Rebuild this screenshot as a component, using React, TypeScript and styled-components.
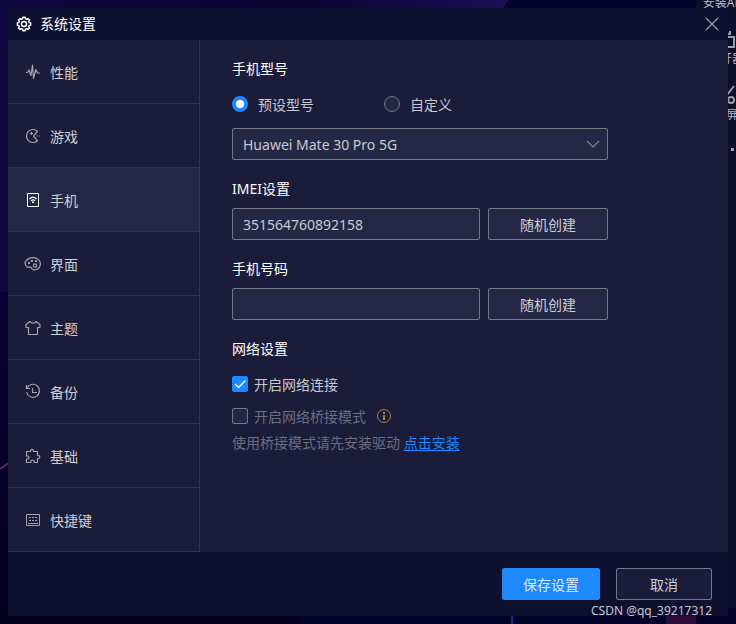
import React, { useState } from "react";
import styled, { createGlobalStyle, css } from "styled-components";

const font = '"Noto Sans", "Noto Sans CJK SC", sans-serif';

const GlobalStyle = createGlobalStyle`
  * { box-sizing: border-box; }
  body { margin: 0; background: #04001f; font-family: ${font}; font-size: 14px; }
  button, input, select { font: inherit; margin: 0; }
`;

const Desktop = styled.div`
  position: relative;
  overflow: hidden;
  min-height: 100vh;
  padding: 8px;
`;

const Wallpaper = styled.svg`
  position: absolute;
  inset: 0;
  width: 100%;
  height: 100%;
`;

const ToolStrip = styled.div`
  position: absolute;
  top: -45px;
  right: -20px;
  bottom: 0;
  width: 60px;
  color: #9c9dab;
  background: linear-gradient(#0c0d28 0 653px, transparent 653px);
`;

const Tool = styled.div`
  display: flex;
  flex-direction: column;
  align-items: center;
  height: 56px;
  padding-top: 16px;
  font-size: 12px;
  line-height: 16px;
  white-space: nowrap;
  color: #b9bac4;

  svg { width: 24px; height: 24px; flex: none; color: #9c9dab; }
`;

const Dialog = styled.section`
  position: relative;
  display: flex;
  flex-direction: column;
  background: #0d102e;
`;

const TitleBar = styled.header`
  display: flex;
  align-items: center;
  gap: 8px;
  height: 32px;
  padding: 0 8px;
  color: #fff;

  svg { width: 16px; height: 16px; }
`;

const Title = styled.h1`
  flex: 1;
  margin: 0;
  font-size: 14px;
  font-weight: 400;
  line-height: 24px;
`;

const CloseButton = styled.button`
  display: flex;
  padding: 0;
  border: 0;
  background: none;
  color: #9b9dab;
  cursor: pointer;
`;

const Body = styled.div`
  display: flex;
  background: #1a1c39;
`;

const Sidebar = styled.nav`
  flex: none;
  width: 192px;
  border-right: 1px solid #35344f;
`;

const NavItem = styled.button<{ $active: boolean }>`
  display: flex;
  align-items: center;
  gap: 8px;
  width: 100%;
  height: 64px;
  padding: 0 16px;
  border: 0;
  border-bottom: 1px solid #35344f;
  background: ${(p) => (p.$active ? "#252844" : "transparent")};
  color: #cfcfd4;
  text-align: left;
  cursor: pointer;

  svg { width: 18px; height: 18px; color: ${(p) => (p.$active ? "#fff" : "#a3a4b0")}; }
`;

const Panel = styled.main`
  flex: 1;
  min-width: 0;
  padding: 16px 32px;
`;

const Form = styled.form`
  display: flex;
  flex-direction: column;
  gap: 16px;
  max-width: 376px;
`;

const Section = styled.div`
  display: flex;
  flex-direction: column;
  gap: 6px;
`;

const headingStyle = css`
  margin: 0;
  font-size: 14px;
  font-weight: 400;
  line-height: 26px;
  color: #fff;
`;

const Heading = styled.h2`
  ${headingStyle}
`;

const FieldLabel = styled.label`
  ${headingStyle}
`;

const RadioRow = styled.div`
  display: grid;
  grid-template-columns: 152px 1fr;
  height: 34px;
`;

const Choice = styled.label<{ $gap: number; $dim?: boolean }>`
  display: flex;
  align-items: center;
  gap: ${(p) => p.$gap}px;
  height: 32px;
  color: ${(p) => (p.$dim ? "#6c6d80" : "#c8c8cf")};
`;

const Radio = styled.input`
  appearance: none;
  width: 16px;
  height: 16px;
  border: 1px solid #777886;
  border-radius: 50%;
  background: #252844;

  &:checked { border: 4px solid #1e88ff; background: #fff; }
`;

const Checkbox = styled.input`
  appearance: none;
  width: 16px;
  height: 16px;
  border: 1px solid #777886;
  border-radius: 2px;
  background: #252844;

  &:checked { border-color: #1e88ff; background: #1e88ff; }
`;

const CheckBoxWrap = styled.span`
  display: grid;
  width: 16px;
  height: 16px;

  > * { grid-area: 1 / 1; }
  svg { width: 16px; height: 16px; z-index: 1; color: #fff; pointer-events: none; }
`;

const SelectWrap = styled.div`
  display: grid;
  align-items: center;

  > * { grid-area: 1 / 1; }
  svg { width: 16px; height: 16px; justify-self: end; margin-right: 7px; color: #83848f; pointer-events: none; }
`;

const Select = styled.select`
  appearance: none;
  width: 100%;
  height: 32px;
  padding: 0 32px 0 10px;
  border: 1px solid #777886;
  border-radius: 2px;
  background: #252844;
  color: #c8c8cf;
`;

const FieldRow = styled.div`
  display: flex;
  gap: 8px;
`;

const TextInput = styled.input`
  flex: 1;
  min-width: 0;
  height: 32px;
  padding: 0 10px;
  border: 1px solid #777886;
  border-radius: 2px;
  background: #252844;
  color: #c8c8cf;
`;

const Button = styled.button<{ $width: number; $primary?: boolean; $fill?: string }>`
  width: ${(p) => p.$width}px;
  height: 32px;
  padding: 0;
  border: 1px solid ${(p) => (p.$primary ? "#1e88ff" : "#777886")};
  border-radius: 2px;
  background: ${(p) => (p.$primary ? "#1e88ff" : p.$fill ?? "#252844")};
  color: ${(p) => (p.$primary ? "#dcecff" : "#cfcfd4")};
  cursor: pointer;
`;

const OptionRow = styled.div`
  display: flex;
  align-items: center;
  gap: 10px;

  > svg { width: 16px; height: 16px; color: #b0803a; }
`;

const Hint = styled.p`
  margin: 0;
  line-height: 22px;
  color: #6c6d80;
`;

const Link = styled.a`
  color: #1e88ff;
  text-underline-offset: 2px;
`;

const Footer = styled.footer`
  display: flex;
  justify-content: flex-end;
  gap: 16px;
  padding: 16px;
`;

const Watermark = styled.span`
  position: absolute;
  right: 24px;
  bottom: 5px;
  font-size: 12px;
  line-height: 16px;
  color: #c4c4cc;
`;

const gearPath = Array.from({ length: 8 }, (_, i) => {
  const at = (r: number, turn: number) => {
    const a = ((i + turn) / 8) * Math.PI * 2 - Math.PI / 2;
    return `${(8 + r * Math.cos(a)).toFixed(2)} ${(8 + r * Math.sin(a)).toFixed(2)}`;
  };
  return `${i ? "L" : "M"}${at(6.8, -0.22)}L${at(6.8, 0.22)}L${at(5.4, 0.32)}L${at(5.4, 0.68)}`;
}).join("") + "Z";

const Icon = ({ size = 18, width = 1, children }: { size?: number; width?: number; children: React.ReactNode }) => (
  <svg viewBox={`0 0 ${size} ${size}`} fill="none" stroke="currentColor" strokeWidth={width} aria-hidden="true">
    {children}
  </svg>
);

const navItems = [
  { label: "性能", icon: <path strokeLinejoin="round" strokeWidth="1.2" d="M2 9.500h1.500L5 7l2 5.500L8.500 2l1 13.500 2.300-9 1.700 3.500H16" /> },
  {
    label: "游戏",
    icon: (
      <>
        <path strokeWidth="1.2" strokeLinejoin="round" d="M13.500 4.300A6.500 6.500 0 1 0 13.500 13.700L9.500 9z" />
        <path strokeWidth="1.200" d="M7.500 5v3M6 6.500h3M12.500 9h1.200M15 9h1.200" />
      </>
    ),
  },
  {
    label: "手机",
    icon: (
      <>
        <path d="M3.5 2.5h11v13h-11z" />
        <path strokeWidth="1.2" d="M5.5 8q3.5-3.600 7 0M7 9.800q2-2 4 0" />
        <path d="M8 10.500h2v1.500H8z" fill="currentColor" stroke="none" />
      </>
    ),
  },
  {
    label: "界面",
    icon: (
      <>
        <path strokeWidth="1.2" d="M3.8 12.400C.5 11 .2 7.400 3 4.800 6 2 12 2 14.800 4.800c3 3 1.700 7.600-1.500 9.400-1.900 1.100-4.800.8-5.300-.5-.4-1.200-1.800-1.800-4.200-1.300z" />
        <circle cx="11" cy="10.500" r="1.600" strokeWidth="1.200" />
        <path d="M4 7h2v2H4zM7 5h2v2H7zM11 5h2v2h-2z" fill="currentColor" stroke="none" />
      </>
    ),
  },
  { label: "主题", icon: <path strokeLinejoin="round" strokeWidth="1.2" d="M6 2.5L2 5.5v2.8l2.5.4v6.8h9V8.7l2.5-.4V5.5l-4-3-1 1q-2 1.200-4 0z" /> },
  {
    label: "备份",
    icon: (
      <g strokeWidth="1.2">
        <path d="M2.5 2v3.500H6M2.800 5.500A6.500 6.500 0 1 1 2.500 9" />
        <path d="M8.500 5v4.500H13" />
      </g>
    ),
  },
  {
    label: "基础",
    icon: <path strokeLinejoin="round" strokeWidth="1.2" d="M2.500 4.500h4V3.300q1.500-2 3 0v1.200h4v4h1.200q2.200 1.500 0 3h-1.200v4h-3.300V14q-1.700-2-3.400 0v1.500H2.500V12H4q2-1.500 0-3H2.500z" />,
  },
  {
    label: "快捷键",
    icon: (
      <>
        <path d="M2.500 3.500h13v11h-13z" />
        <path d="M5 6.500h8M5 9.500h8" strokeDasharray="2 1" />
        <path d="M4 12.500h10" />
      </>
    ),
  },
];

export default function App() {
  const [page, setPage] = useState("手机");
  const [preset, setPreset] = useState(true);
  const [online, setOnline] = useState(true);
  const [imei, setImei] = useState("351564760892158");
  const [phone, setPhone] = useState("");
  const randomDigits = (n: number) => Array.from({ length: n }, () => Math.floor(Math.random() * 10)).join("");

  return (
    <Desktop>
      <GlobalStyle />
      <Wallpaper viewBox="0 0 736 624" preserveAspectRatio="none" aria-hidden="true">
        <defs>
          <linearGradient id="glow">
            <stop offset="0" stopColor="#10063f" />
            <stop offset=".6" stopColor="#0b0433" />
            <stop offset="1" stopColor="#1b0f57" />
          </linearGradient>
          <linearGradient id="night" x2="0" y2="1">
            <stop offset="0" stopColor="#080031" />
            <stop offset="1" stopColor="#04001d" />
          </linearGradient>
        </defs>
        <path d="M0 0h736v624H0z" fill="#05022a" />
        <path d="M0 0h508l-5 8L300 292H0z" fill="url(#glow)" />
        <path d="M0 292h300v332H0z" fill="url(#night)" />
        <path d="M0 469l9-6" stroke="#702466" strokeWidth="2" />
        <path d="M512 616v8" stroke="#252b70" strokeWidth="2" />
        <path d="M666 616h30v8h-30z" fill="#2c0b39" />
      </Wallpaper>
      <ToolStrip>
        <Tool><Icon size={24}><path d="M4 14h16M12 4v16" /></Icon>安装APK</Tool>
        <Tool>
          <Icon size={24} width={2}><path d="M3 10h17v10H3zM6 7h10V4" /></Icon>多开器
        </Tool>
        <Tool>
          <Icon size={24} width={2}>
            <path d="M20 3L9 17M4 3l11 14" /><circle cx="17" cy="17" r="3" /><circle cx="7" cy="17" r="3" />
          </Icon>
          截屏
        </Tool>
        <Tool>
          <Icon size={24}><path d="M5 9h3v3H5zM11 9h3v3h-3zM17 9h3v3h-3z" fill="currentColor" stroke="none" /></Icon>
        </Tool>
      </ToolStrip>

      <Dialog role="dialog" aria-labelledby="dialog-title">
        <TitleBar>
          <Icon size={16}>
            <path d={gearPath} strokeWidth="1.4" strokeLinejoin="round" />
            <circle cx="8" cy="8" r="2.5" strokeWidth="1.4" />
          </Icon>
          <Title id="dialog-title">系统设置</Title>
          <CloseButton type="button" aria-label="关闭"><Icon size={16} width={1.2}><path d="M2 2l12 12M14 2L2 14" /></Icon></CloseButton>
        </TitleBar>

        <Body>
          <Sidebar>
            {navItems.map((item) => (
              <NavItem key={item.label} type="button" $active={item.label === page} onClick={() => setPage(item.label)}>
                <Icon>{item.icon}</Icon>
                {item.label}
              </NavItem>
            ))}
          </Sidebar>

          <Panel>
            <Form id="settings" onSubmit={(e) => e.preventDefault()}>
              <Section>
                <Heading id="model-title">手机型号</Heading>
                <RadioRow role="radiogroup" aria-labelledby="model-title">
                  <Choice $gap={10}>
                    <Radio type="radio" name="model" checked={preset} onChange={() => setPreset(true)} />预设型号
                  </Choice>
                  <Choice $gap={10}>
                    <Radio type="radio" name="model" checked={!preset} onChange={() => setPreset(false)} />自定义
                  </Choice>
                </RadioRow>
                <SelectWrap>
                  <Select aria-labelledby="model-title"><option>Huawei Mate 30 Pro 5G</option></Select>
                  <Icon size={16} width={1.2}><path d="M2 5l6 6 6-6" /></Icon>
                </SelectWrap>
              </Section>

              <Section>
                <FieldLabel htmlFor="imei">IMEI设置</FieldLabel>
                <FieldRow>
                  <TextInput id="imei" value={imei} onChange={(e) => setImei(e.target.value)} />
                  <Button type="button" $width={120} onClick={() => setImei(randomDigits(15))}>随机创建</Button>
                </FieldRow>
              </Section>

              <Section>
                <FieldLabel htmlFor="phone">手机号码</FieldLabel>
                <FieldRow>
                  <TextInput id="phone" value={phone} onChange={(e) => setPhone(e.target.value)} />
                  <Button type="button" $width={120} onClick={() => setPhone("1" + randomDigits(10))}>随机创建</Button>
                </FieldRow>
              </Section>

              <Section>
                <Heading>网络设置</Heading>
                <div>
                  <OptionRow>
                    <Choice $gap={6}>
                      <CheckBoxWrap>
                        <Checkbox type="checkbox" checked={online} onChange={(e) => setOnline(e.target.checked)} />
                        {online && <Icon size={16} width={1.3}><path d="M3 8l3.5 3.5 7-7" /></Icon>}
                      </CheckBoxWrap>
                      开启网络连接
                    </Choice>
                  </OptionRow>
                  <OptionRow>
                    <Choice $gap={6} $dim>
                      <CheckBoxWrap><Checkbox type="checkbox" disabled /></CheckBoxWrap>
                      开启网络桥接模式
                    </Choice>
                    <Icon size={16}>
                      <circle cx="8" cy="8" r="6.5" />
                      <path d="M7 4h2v2H7zM7 7h2v5H7z" fill="currentColor" stroke="none" />
                    </Icon>
                  </OptionRow>
                  <Hint>使用桥接模式请先安装驱动 <Link href="#install">点击安装</Link></Hint>
                </div>
              </Section>
            </Form>
          </Panel>
        </Body>

        <Footer>
          <Button type="submit" form="settings" $width={98} $primary>保存设置</Button>
          <Button type="button" $width={96} $fill="#1a1c39">取消</Button>
        </Footer>
      </Dialog>
      <Watermark>CSDN @qq_39217312</Watermark>
    </Desktop>
  );
}
